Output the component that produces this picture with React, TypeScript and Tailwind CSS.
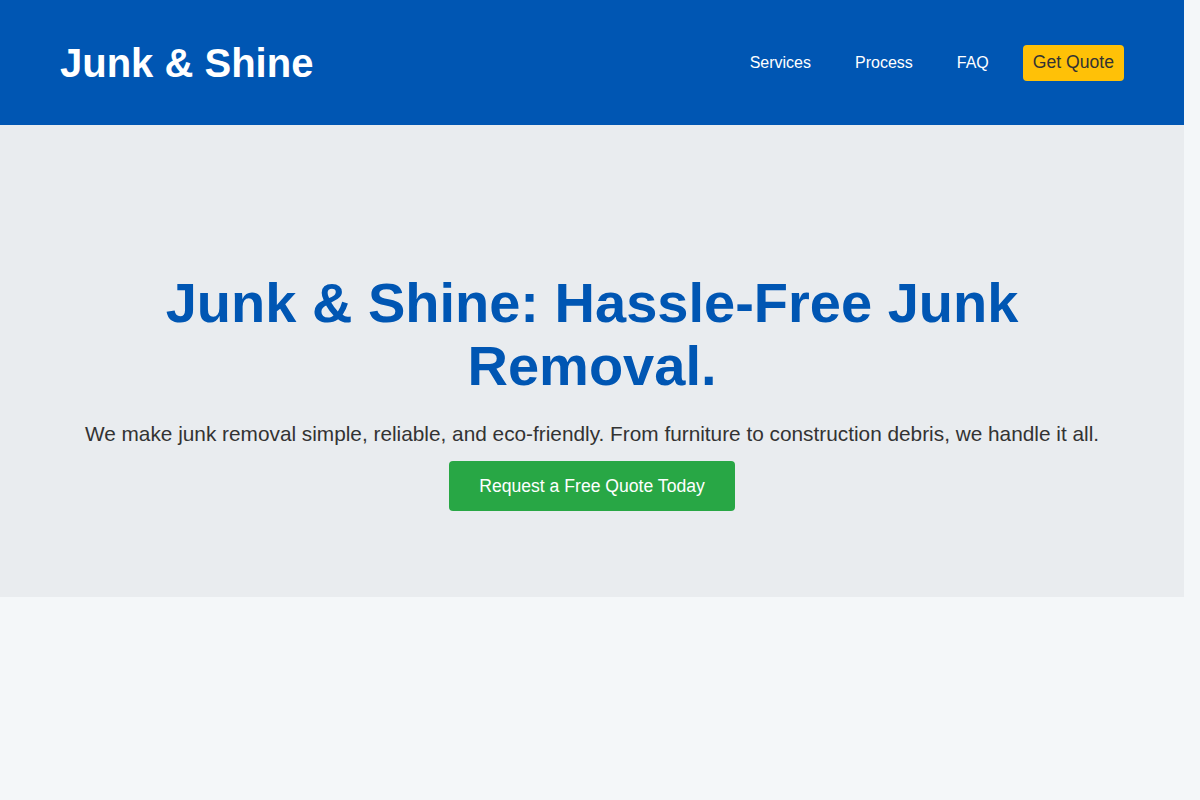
import React from "react";

const navLinks = ["Services", "Process", "FAQ"];

const Header = () => (
  <header className="flex h-[125px] items-center justify-between bg-[#0056b3] px-[60px]">
    <h1 className="text-[40px] font-bold leading-none text-white">Junk &amp; Shine</h1>
    <nav className="flex items-center gap-6">
      {navLinks.map((link) => (
        <a key={link} href="#" className="px-[10px] text-base text-white">
          {link}
        </a>
      ))}
      <a
        href="#"
        className="flex h-9 items-center rounded-[4px] bg-[#ffc107] px-[10px] text-[17.6px] text-[#333]"
      >
        Get Quote
      </a>
    </nav>
  </header>
);

const Hero = () => (
  <section className="bg-[#e9ecef] px-[72px] pt-[147px] pb-[86px] text-center">
    <h2 className="text-[56px] font-bold leading-[62.5px] text-[#0056b3]">
      Junk &amp; Shine: Hassle-Free Junk Removal.
    </h2>
    <p className="mt-[26px] text-[20.8px] leading-[22px] text-[#333]">
      We make junk removal simple, reliable, and eco-friendly. From furniture to construction debris, we
      handle it all.
    </p>
    <a
      href="#"
      className="mt-4 inline-flex h-[50px] items-center rounded-[4px] bg-[#28a745] px-[30px] text-[17.6px] text-white"
    >
      Request a Free Quote Today
    </a>
  </section>
);

export default function App() {
  return (
    <div className="min-h-[800px] bg-[#f4f7f9] font-['Liberation_Sans',Arial,sans-serif]">
      <div className="w-[1184px]">
        <Header />
        <Hero />
      </div>
    </div>
  );
}
